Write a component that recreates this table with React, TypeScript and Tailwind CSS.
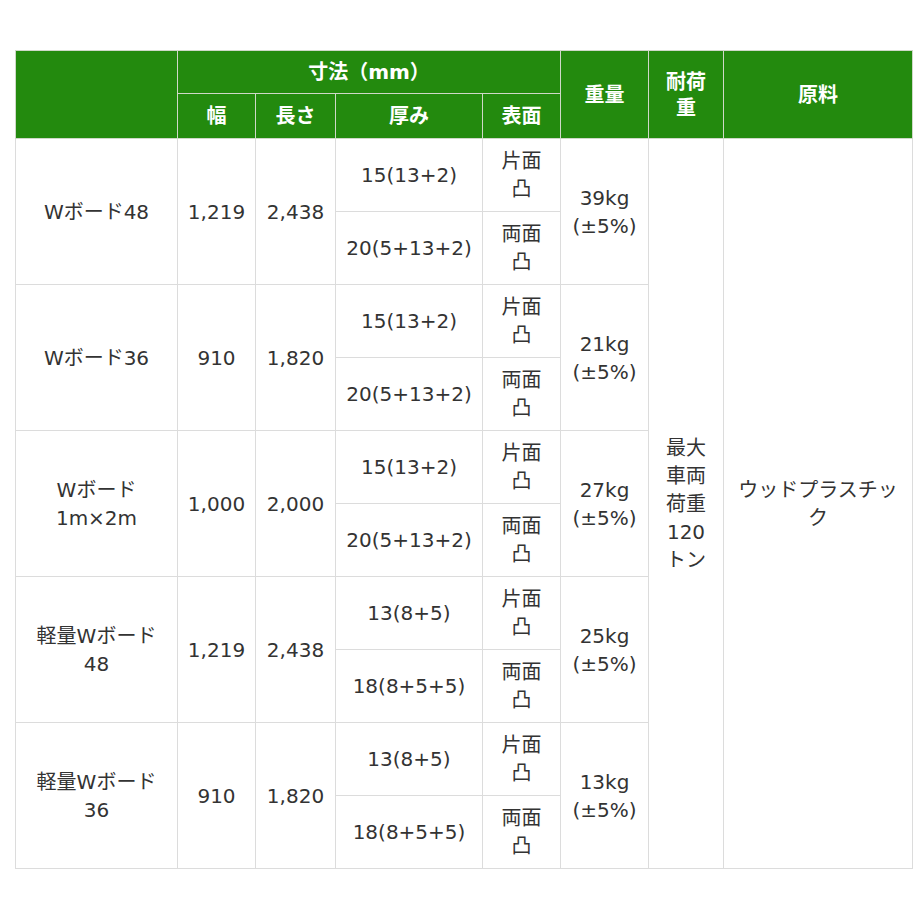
const groups = [
  {
    name: ["Wボード48"],
    width: "1,219",
    length: "2,438",
    thick: ["15(13+2)", "20(5+13+2)"],
    weight: "39kg",
  },
  {
    name: ["Wボード36"],
    width: "910",
    length: "1,820",
    thick: ["15(13+2)", "20(5+13+2)"],
    weight: "21kg",
  },
  {
    name: ["Wボード", "1m×2m"],
    width: "1,000",
    length: "2,000",
    thick: ["15(13+2)", "20(5+13+2)"],
    weight: "27kg",
  },
  {
    name: ["軽量Wボード", "48"],
    width: "1,219",
    length: "2,438",
    thick: ["13(8+5)", "18(8+5+5)"],
    weight: "25kg",
  },
  {
    name: ["軽量Wボード", "36"],
    width: "910",
    length: "1,820",
    thick: ["13(8+5)", "18(8+5+5)"],
    weight: "13kg",
  },
];

const surfaces = ["片面", "両面"];

const th = "border border-[#cfd8c8] bg-[#238a0e] text-center align-middle font-bold text-white text-[20px] leading-[26px]";
const td = "border border-[#dcdcdc] text-center align-middle";

export default function App() {
  return (
    <div className="min-h-[920px] bg-white pl-[15px] pt-[50px] font-['DejaVu_Sans','Noto_Sans_CJK_JP',sans-serif] text-[20px] leading-[28px] text-[#333]">
      <table className="w-[897px] table-fixed border-collapse">
        <colgroup>
          <col className="w-[162px]" />
          <col className="w-[78px]" />
          <col className="w-[80px]" />
          <col className="w-[147px]" />
          <col className="w-[78px]" />
          <col className="w-[88px]" />
          <col className="w-[75px]" />
          <col className="w-[189px]" />
        </colgroup>
        <thead>
          <tr className="h-[43px]">
            <th rowSpan={2} className={th}></th>
            <th colSpan={4} className={th}>寸法（mm）</th>
            <th rowSpan={2} className={th}>重量</th>
            <th rowSpan={2} className={th}>
              耐荷
              <br />重
            </th>
            <th rowSpan={2} className={th}>原料</th>
          </tr>
          <tr className="h-[45px]">
            <th className={th}>幅</th>
            <th className={th}>長さ</th>
            <th className={th}>厚み</th>
            <th className={th}>表面</th>
          </tr>
        </thead>
        <tbody>
          {groups.map((g, gi) =>
            g.thick.map((t, i) => (
              <tr key={`${gi}-${i}`} className="h-[73px]">
                {i === 0 && (
                  <>
                    <td rowSpan={2} className={td}>
                      {g.name.map((n, ni) => (
                        <div key={ni}>{n}</div>
                      ))}
                    </td>
                    <td rowSpan={2} className={td}>{g.width}</td>
                    <td rowSpan={2} className={td}>{g.length}</td>
                  </>
                )}
                <td className={td}>{t}</td>
                <td className={td}>
                  <div>{surfaces[i]}</div>
                  <div>凸</div>
                </td>
                {i === 0 && (
                  <td rowSpan={2} className={td}>
                    <div>{g.weight}</div>
                    <div>(±5%)</div>
                  </td>
                )}
                {gi === 0 && i === 0 && (
                  <>
                    <td rowSpan={10} className={td}>
                      <div>最大</div>
                      <div>車両</div>
                      <div>荷重</div>
                      <div>120</div>
                      <div>トン</div>
                    </td>
                    <td rowSpan={10} className={td}>
                      <div>ウッドプラスチッ</div>
                      <div>ク</div>
                    </td>
                  </>
                )}
              </tr>
            ))
          )}
        </tbody>
      </table>
    </div>
  );
}
